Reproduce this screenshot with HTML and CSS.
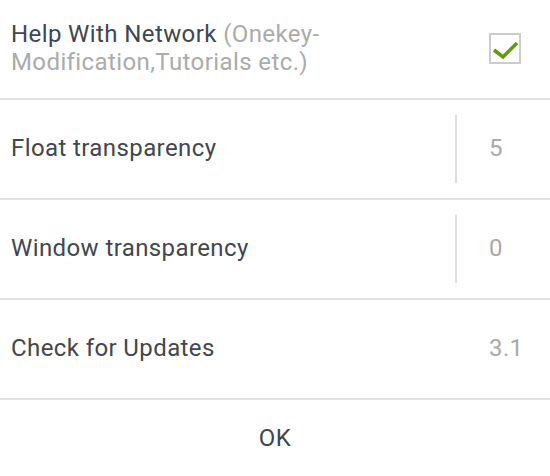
FILE: index.html
```html
<!DOCTYPE html>
<html lang="en">
<head>
    <meta charset="UTF-8">
    <meta name="viewport" content="width=device-width, initial-scale=1.0">
    <title>Settings</title>
    <link rel="stylesheet" href="styles.css">
</head>
<body>
    <div class="dialog">
        <div class="row">
            <div class="label narrow">Help With Network <span class="hint">(Onekey-Modification,Tutorials etc.)</span></div>
            <div class="side">
                <div class="checkbox">
                    <svg width="28" height="27" viewBox="0 0 28 27">
                        <polyline points="3,15 12,22 26,8" fill="none" stroke="#5e9c0c" stroke-width="3.5"/>
                    </svg>
                </div>
            </div>
        </div>
        <div class="row">
            <div class="label">Float transparency</div>
            <div class="side sep"><span class="value">5</span></div>
        </div>
        <div class="row">
            <div class="label">Window transparency</div>
            <div class="side sep"><span class="value">0</span></div>
        </div>
        <div class="row">
            <div class="label">Check for Updates</div>
            <div class="side"><span class="value">3.1</span></div>
        </div>
        <div class="ok">OK</div>
    </div>
</body>
</html>
```

FILE: styles.css
```css
body{
    margin: 0;
    background-color: white;
    font-family: Roboto, 'Liberation Sans', sans-serif;
    font-size: 24px;
    letter-spacing: 0.4px;
    color: #41474e;
}
.row{
    display: flex;
    align-items: center;
    height: 98px;
    border-bottom: 2px solid #e2e2e2;
}
.label{
    flex: 1;
    padding-left: 11px;
    line-height: 28px;
    margin-top: -3px;
}
.label.narrow{
    flex: none;
    width: 315px;
}
.hint{
    color: #ababab;
}
.side{
    margin-left: auto;
    width: 95px;
    height: 68px;
    display: flex;
    align-items: center;
    box-sizing: border-box;
    padding-left: 34px;
}
.side.sep{
    border-left: 2px solid #dddddd;
    padding-left: 32px;
}
.value{
    color: #a9a9a9;
    margin-top: -3px;
}
.checkbox{
    width: 28px;
    height: 27px;
    border: 2px solid #cccccc;
    margin-top: -2px;
}
.checkbox svg{
    display: block;
}
.ok{
    height: 76px;
    display: flex;
    align-items: center;
    justify-content: center;
}
```
